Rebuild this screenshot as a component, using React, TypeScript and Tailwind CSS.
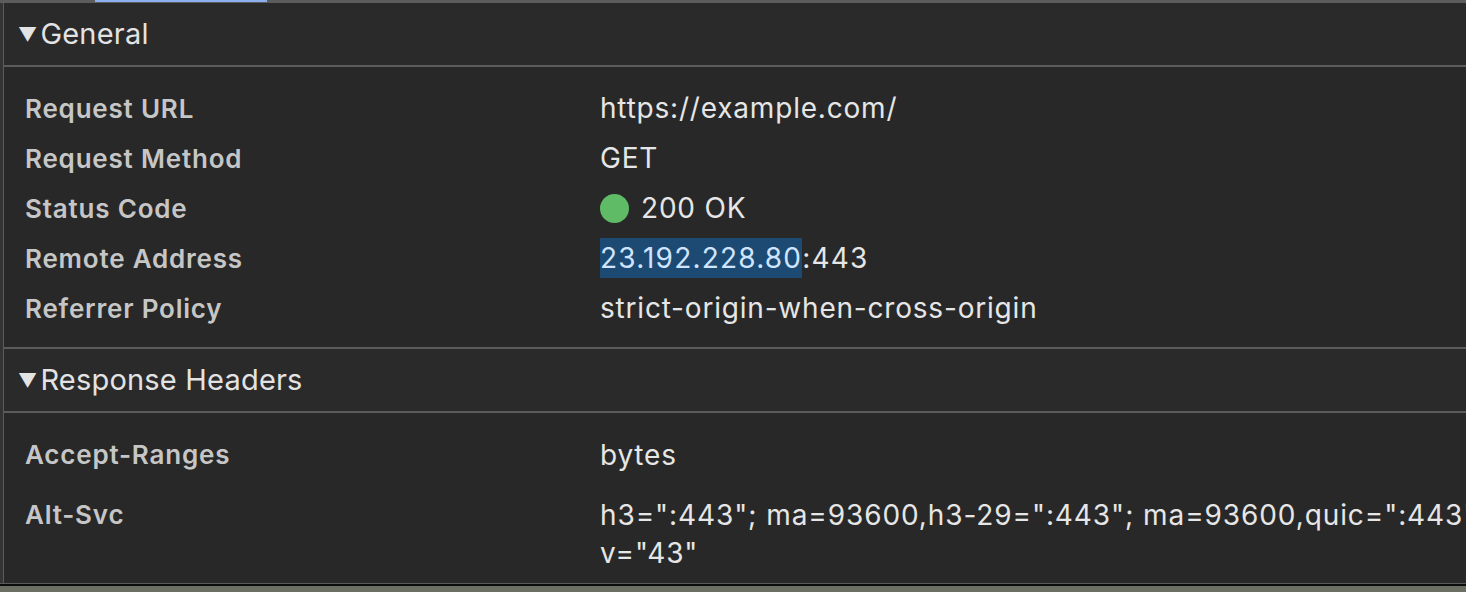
import React from 'react'

const general: [string, React.ReactNode][] = [
  ['Request URL', 'https://example.com/'],
  ['Request Method', 'GET'],
  [
    'Status Code',
    <span className="flex items-center gap-[12px]">
      <span className="inline-block w-[29px] h-[29px] rounded-full bg-[#5fbb66]" />
      200 OK
    </span>,
  ],
  [
    'Remote Address',
    <span className="tracking-[1.2px]">
      <span className="bg-[#1d4a73] text-[#cfe5ff] inline-block leading-[40px]">23.192.228.80</span>:443
    </span>,
  ],
  ['Referrer Policy', 'strict-origin-when-cross-origin'],
]

const SectionHeader = ({ title }: { title: string }) => (
  <div className="h-[64px] flex items-center pl-[14px] border-b-2 border-[#5b5b5b] text-[29px] tracking-[0.2px] text-[#e3e3e3] bg-[#2a2a2b]">
    <span className="text-[19px] mr-[3px] mt-[2px]">▼</span>
    {title}
  </div>
)

const Label = ({ children }: { children: React.ReactNode }) => (
  <div className="w-[596px] shrink-0 pl-[21px] text-[26px] tracking-[0.8px] font-semibold text-[#c6c6c6]">{children}</div>
)

export default function App() {
  return (
    <div
      className="w-[1466px] h-[592px] overflow-hidden flex flex-col bg-[#282828]"
      style={{ fontFamily: 'Inter, "Noto Sans", sans-serif' }}
    >
      <div className="h-[3px] bg-[#5c5c5c] flex shrink-0">
        <div className="ml-[95px] w-[172px] h-[2px] bg-[#8cb0ee]" />
      </div>
      <div className="flex h-[580px] shrink-0">
        <div className="w-[3px] bg-[#343434]" />
        <div className="flex-1 border-l border-[#5c5c5c] overflow-hidden">
          <SectionHeader title="General" />
          <div className="pt-[16px] pb-[14px] border-b-2 border-[#5b5b5b]">
            {general.map(([k, v]) => (
              <div key={k} className="h-[50px] flex items-center">
                <Label>{k}</Label>
                <div className="text-[28px] tracking-[0.8px] text-[#e6e6e6] whitespace-nowrap">{v}</div>
              </div>
            ))}
          </div>
          <SectionHeader title="Response Headers" />
          <div className="pt-[23px] pb-[11px] flex leading-[38px]">
            <Label>Accept-Ranges</Label>
            <div className="text-[28px] tracking-[0.8px] text-[#e6e6e6]">bytes</div>
          </div>
          <div className="py-[11px] flex leading-[38px]">
            <Label>Alt-Svc</Label>
            <div className="text-[28px] tracking-[0.9px] text-[#e6e6e6] whitespace-nowrap">
              <div>h3=":443"; ma=93600,h3-29=":443"; ma=93600,quic=":443"; ma=93600;</div>
              <div>v="43"</div>
            </div>
          </div>
        </div>
      </div>
      <div className="h-[1px] bg-[#5a5a5a] shrink-0" />
      <div className="h-[2px] bg-[#0c0c0c] shrink-0" />
      <div className="flex-1 bg-[#6c7064]" />
    </div>
  )
}
